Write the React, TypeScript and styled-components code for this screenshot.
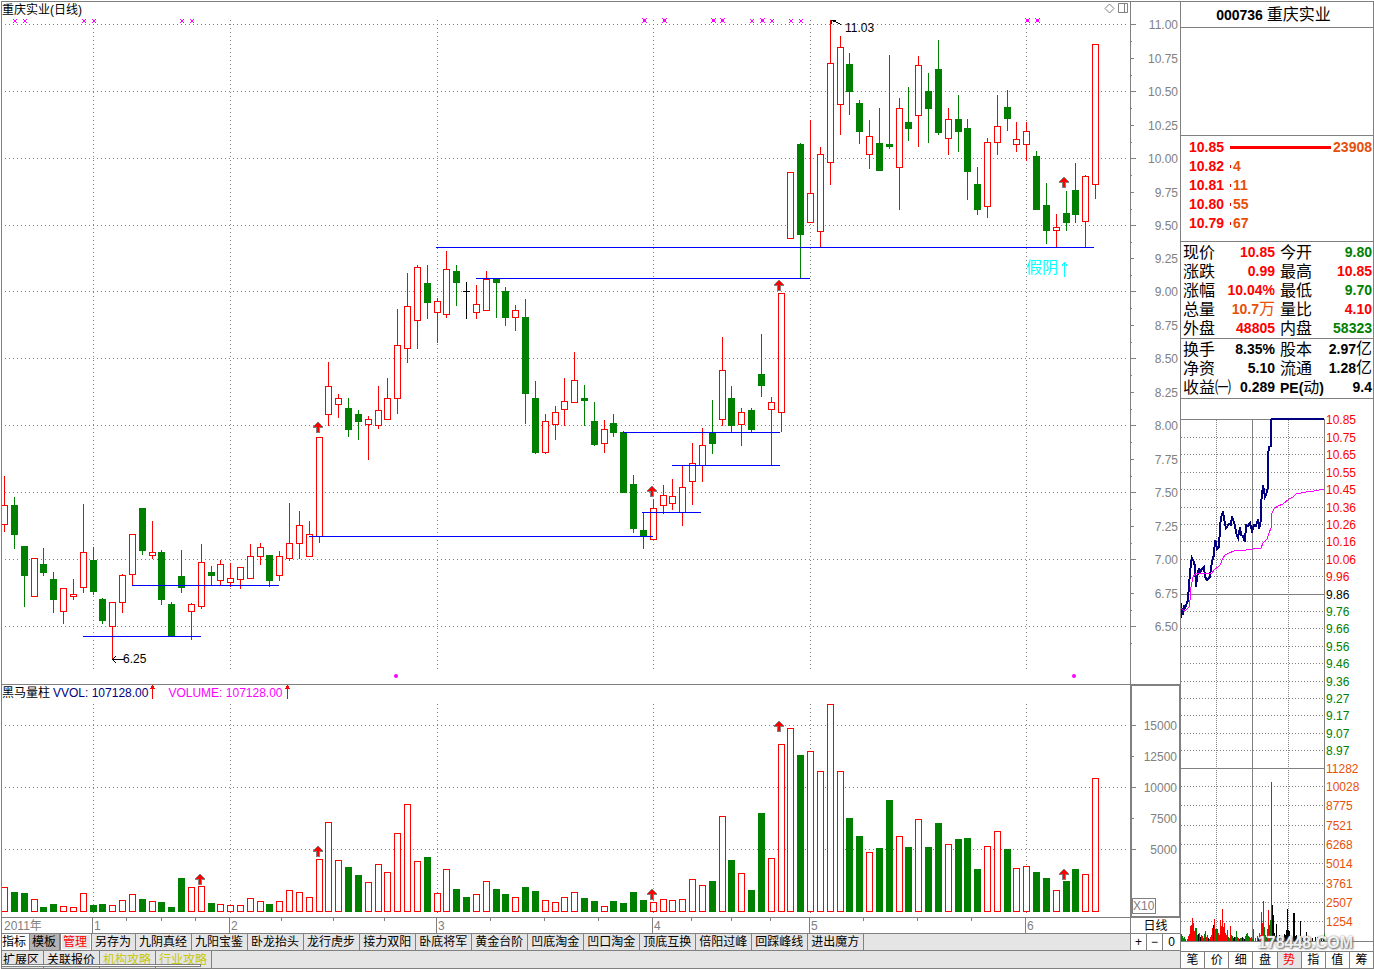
import React from "react";
import styled, { createGlobalStyle, css } from "styled-components";

const GRAY = "#808080";
const RED = "#ff0000";
const GREEN = "#008000";
const ORANGE = "#e6500a";
const NAVY = "#000080";
const BLUE = "#0000ff";
const MAGENTA = "#ff00ff";

const GlobalStyle = createGlobalStyle`
  * { box-sizing: border-box; }
  body {
    margin: 0;
    background: #ffffff;
    color: #000000;
    font-family: "Liberation Sans", "Noto Sans CJK SC", sans-serif;
    font-size: 12px;
  }
  button {
    margin: 0;
    padding: 0;
    border: 0;
    background: none;
    color: inherit;
    font: inherit;
    cursor: pointer;
  }
  svg { display: block; }
  svg text { font-family: "Liberation Sans", "Noto Sans CJK SC", sans-serif; }
`;

/* ---------- layout ---------- */

const Page = styled.div`
  display: flex;
  min-height: 100vh;
  padding: 1px 0 0 1px;
`;

const ChartSide = styled.main`
  flex: 1;
  min-width: 0;
  display: grid;
  grid-template-columns: minmax(0, 1fr) 50px;
  grid-template-rows: 683px 1fr 16px 17px 18px;
  border-top: 1px solid ${GRAY};
  border-left: 1px solid ${GRAY};
`;

const Pane = styled.section`
  min-width: 0;
  border-bottom: 1px solid ${GRAY};
`;

const AxisPane = styled(Pane)`
  border-left: 1px solid ${GRAY};
`;

const SelectedAxis = styled(Pane)`
  border: 1px solid ${GRAY};
  border-left-width: 2px;
  border-bottom-width: 2px;
`;

const PaneHeader = styled.header`
  display: flex;
  align-items: center;
  height: 16px;
  padding-right: 2px;
  line-height: 14px;
  white-space: nowrap;
`;

const PaneTitle = styled.h1`
  flex: 1;
  margin: 0;
  font-size: 12px;
  font-weight: normal;
`;

const PaneTools = styled.div`
  display: flex;
  align-self: flex-start;
  gap: 3px;
  padding-top: 1px;
`;

const Readout = styled.span<{ $color: string }>`
  display: flex;
  align-items: center;
  gap: 2px;
  margin-right: 13px;
  color: ${(p) => p.$color};
`;

const ReadoutName = styled.span`
  margin-right: 3px;
`;

const Canvas = styled.svg<{ $height: number }>`
  width: 100%;
  height: ${(p) => p.$height}px;
  overflow: hidden;
  shape-rendering: crispEdges;
`;

const PeriodButton = styled.button`
  && {
    border-left: 1px solid ${GRAY};
    border-bottom: 1px solid ${GRAY};
    line-height: 14px;
  }
`;

const TabBar = styled.nav<{ $wide?: boolean }>`
  position: relative;
  display: flex;
  overflow: hidden;
  background: #e5e5e5;
  border-bottom: 1px solid ${GRAY};
  ${(p) => p.$wide && css`grid-column: 1 / -1;`}
`;

type TabKind = "plain" | "white" | "dark" | "framed" | "short" | "yellow";

const tabKinds = {
  plain: css``,
  white: css`
    padding: 0 3px 0 0;
    background: #ffffff;
  `,
  dark: css`
    padding: 0 3px 0 2px;
    background: #b3b3b3;
    border-right-width: 2px;
  `,
  framed: css`
    padding: 0 4px 0 2px;
    color: ${RED};
    box-shadow: inset 0 0 0 1px #ffffff;
  `,
  short: css`
    padding: 0 4px 0 1px;
  `,
  yellow: css`
    color: #c8c800;
  `,
};

const Tab = styled.button<{ $kind: TabKind }>`
  && {
    flex: none;
    padding: 0 4px 0 3px;
    border-right: 1px solid ${GRAY};
    line-height: 16px;
    white-space: nowrap;
    ${(p) => tabKinds[p.$kind]}
  }
`;

const ScrollStrip = styled.span`
  position: absolute;
  left: 0;
  bottom: 1px;
  width: 199px;
  height: 3px;
  background: #ffffff;
  border: solid ${GRAY};
  border-width: 1px 1px 1px 0;
`;

const ZoomButtons = styled.div`
  display: grid;
  grid-template-columns: 15px 15px 1fr;
  gap: 1px;
  background: ${GRAY};
  border-left: 1px solid ${GRAY};
  border-bottom: 1px solid ${GRAY};
`;

const ZoomButton = styled.button`
  && {
    background: #ffffff;
    line-height: 16px;
  }
`;

const Side = styled.aside`
  position: relative;
  flex: none;
  width: 194px;
  display: flex;
  flex-direction: column;
  border: 1px solid ${GRAY};
`;

const SideTitle = styled.h2`
  height: 26px;
  margin: 0;
  padding-right: 7px;
  border-bottom: 1px solid ${GRAY};
  font-size: 14px;
  line-height: 26px;
  text-align: center;
`;

const Cjk = styled.span`
  font-size: 16px;
  font-weight: normal;
  line-height: 1;
`;

const EmptyBox = styled.div`
  height: 108px;
  border-bottom: 1px solid ${GRAY};
`;

const Quotes = styled.ul`
  height: 106px;
  margin: 0;
  padding: 2px 1px 0 8px;
  border-bottom: 1px solid ${GRAY};
  list-style: none;
  font-size: 14px;
  font-weight: bold;
  line-height: 19px;
`;

const QuoteRow = styled.li`
  display: flex;
  align-items: center;
  height: 19px;
`;

const QuotePrice = styled.span`
  width: 41px;
  color: ${RED};
`;

const QuoteBar = styled.span<{ $full: boolean }>`
  flex: ${(p) => (p.$full ? "1" : "none")};
  width: 1px;
  height: 3px;
  margin-right: 2px;
  background: ${RED};
`;

const QuoteSize = styled.span`
  color: ${ORANGE};
`;

const StatsBox = styled.div<{ $gap: number }>`
  padding: 1px 1px ${(p) => p.$gap}px 2px;
  border-bottom: 1px solid ${GRAY};
`;

const Stats = styled.table`
  width: 100%;
  table-layout: fixed;
  border-collapse: collapse;
  font-size: 14px;
  white-space: nowrap;
`;

const StatRow = styled.tr`
  height: 19px;
`;

const StatLabel = styled.th`
  padding: 0;
  font-size: 16px;
  font-weight: normal;
  line-height: 18px;
  text-align: left;
`;

const StatValue = styled.td<{ $color: string }>`
  padding: 0 0 2px;
  color: ${(p) => p.$color};
  font-weight: bold;
  line-height: 16px;
  text-align: right;
  &:nth-child(2) { padding-right: 5px; }
`;

const StatColumn = styled.col<{ $width: number }>`
  width: ${(p) => p.$width}px;
`;

const Latin = styled.b`
  font-size: 14px;
`;

const SideTabs = styled.nav`
  display: flex;
  margin-top: auto;
  height: 17px;
  border-top: 1px solid ${GRAY};
`;

const SideTab = styled.button<{ $active: boolean }>`
  && {
    flex: 1;
    line-height: 16px;
    color: ${(p) => (p.$active ? RED : "#000000")};
    background: ${(p) => (p.$active ? "#e5e5e5" : "#ffffff")};
    border-right: 1px solid ${GRAY};
  }
  &&:last-child { border-right: 0; }
`;

const Watermark = styled.span`
  position: absolute;
  right: 20px;
  bottom: 17px;
  color: rgba(255, 255, 255, 0.9);
  font-size: 16px;
  font-weight: bold;
  line-height: 16px;
  text-shadow: 1px 1px 2px #666666, 0 0 2px #999999;
  pointer-events: none;
`;

/* ---------- data ---------- */

type Kind = "r" | "g" | "k";
/* kind, high, body top, body bottom, low, volume top */
type Candle = [Kind, number, number, number, number, number];

const candles: Candle[] = [
  ["r", 476, 505, 525, 532, 887], ["g", 497, 505, 535, 549, 892], ["g", 546, 546, 576, 607, 893],
  ["r", 558, 558, 597, 597, 899], ["g", 548, 564, 573, 576, 907], ["g", 572, 579, 600, 613, 904],
  ["r", 588, 588, 612, 624, 906], ["r", 579, 594, 597, 600, 907], ["r", 504, 552, 588, 593, 893],
  ["g", 547, 560, 592, 595, 905], ["g", 598, 599, 621, 624, 904], ["r", 602, 602, 627, 659, 905],
  ["r", 574, 575, 603, 613, 900], ["r", 534, 534, 575, 586, 894], ["g", 508, 508, 551, 555, 899],
  ["r", 521, 552, 556, 559, 901], ["g", 550, 552, 600, 605, 902], ["g", 602, 604, 636, 636, 907],
  ["g", 550, 576, 588, 593, 878], ["r", 603, 604, 612, 640, 887], ["r", 544, 562, 607, 609, 886],
  ["g", 566, 572, 576, 586, 903], ["r", 560, 564, 581, 586, 904], ["r", 563, 578, 583, 587, 905],
  ["r", 567, 567, 580, 589, 905], ["r", 544, 556, 579, 579, 898], ["r", 543, 547, 557, 565, 901],
  ["g", 555, 555, 581, 587, 904], ["r", 551, 556, 576, 581, 901], ["r", 503, 543, 559, 561, 890],
  ["r", 511, 525, 544, 559, 892], ["r", 521, 534, 557, 557, 897], ["r", 437, 437, 537, 543, 859],
  ["r", 362, 386, 415, 426, 822], ["r", 394, 398, 405, 418, 860], ["g", 398, 408, 430, 437, 867],
  ["g", 410, 414, 422, 440, 875], ["r", 416, 419, 425, 460, 882], ["r", 386, 410, 426, 429, 864],
  ["r", 378, 398, 420, 420, 872], ["r", 309, 345, 399, 414, 833], ["r", 273, 306, 349, 363, 804],
  ["r", 265, 267, 321, 349, 861], ["g", 265, 283, 303, 319, 857], ["r", 298, 301, 313, 343, 893],
  ["r", 251, 269, 315, 318, 869], ["g", 265, 271, 283, 306, 889], ["k", 282, 291, 292, 319, 897],
  ["r", 285, 304, 313, 319, 894], ["r", 271, 279, 311, 311, 881], ["g", 278, 278, 283, 318, 889],
  ["g", 287, 291, 318, 326, 894], ["r", 305, 310, 318, 331, 897], ["g", 299, 317, 394, 424, 887],
  ["g", 381, 398, 453, 454, 891], ["r", 414, 421, 453, 454, 900], ["r", 406, 412, 425, 440, 902],
  ["r", 378, 401, 410, 426, 897], ["r", 352, 380, 403, 403, 892], ["g", 385, 398, 401, 426, 898],
  ["g", 402, 421, 445, 446, 901], ["r", 420, 429, 444, 453, 906], ["g", 414, 423, 433, 437, 901],
  ["g", 431, 432, 493, 493, 903], ["g", 475, 484, 529, 533, 892], ["g", 513, 530, 536, 549, 900],
  ["r", 499, 508, 540, 540, 902], ["r", 485, 495, 506, 514, 899], ["r", 479, 496, 504, 510, 900],
  ["r", 466, 487, 513, 526, 899], ["r", 443, 463, 482, 505, 879], ["r", 428, 445, 466, 482, 885],
  ["g", 400, 432, 444, 454, 881], ["r", 337, 370, 420, 426, 816], ["g", 386, 398, 426, 432, 860],
  ["r", 408, 412, 425, 446, 873], ["g", 408, 410, 430, 432, 890], ["g", 334, 374, 386, 397, 813],
  ["r", 397, 402, 410, 465, 858], ["r", 293, 293, 413, 432, 744], ["r", 172, 172, 239, 239, 728],
  ["g", 143, 144, 235, 278, 755], ["r", 120, 193, 223, 223, 751], ["r", 147, 154, 232, 247, 771],
  ["r", 20, 63, 163, 185, 704], ["r", 36, 47, 105, 135, 771], ["g", 53, 64, 92, 115, 818],
  ["g", 100, 103, 132, 144, 836], ["r", 120, 136, 155, 169, 852], ["g", 108, 143, 171, 171, 848],
  ["g", 55, 144, 147, 149, 800], ["r", 98, 108, 168, 210, 836], ["g", 87, 122, 129, 141, 847],
  ["r", 56, 65, 116, 147, 819], ["g", 73, 91, 109, 143, 847], ["g", 40, 69, 133, 135, 823],
  ["r", 108, 119, 139, 155, 844], ["g", 95, 119, 132, 152, 839], ["g", 119, 128, 172, 200, 838],
  ["g", 167, 184, 210, 215, 869], ["r", 138, 142, 207, 218, 846], ["r", 95, 126, 143, 155, 831],
  ["g", 90, 107, 119, 131, 849], ["r", 122, 139, 145, 152, 868], ["r", 122, 131, 145, 161, 866],
  ["g", 151, 156, 210, 210, 872], ["g", 183, 205, 231, 244, 878], ["r", 214, 227, 231, 247, 890],
  ["g", 191, 213, 223, 231, 881], ["g", 163, 190, 215, 223, 869], ["r", 175, 176, 222, 247, 874],
  ["r", 44, 44, 185, 199, 778],
];

const barX = (i: number) => Math.floor(4.6 + 9.829 * i);
const kindColor: Record<Kind, string> = { r: RED, g: GREEN, k: "#000000" };

const monthX = [93, 230, 437, 653, 810, 1026];
const priceTicks = [24, 58, 91, 125, 158, 192, 225, 258, 291, 325, 358, 392, 425, 459, 492, 526, 559, 593, 626];
const volumeTicks: [number, string][] = [
  [725, "15000"], [756, "12500"], [787, "10000"], [818, "7500"], [849, "5000"],
];

/* x from, x to, y */
const levels: [number, number, number][] = [
  [83, 201, 636], [132, 279, 585], [309, 653, 536], [642, 701, 512],
  [672, 780, 465], [623, 780, 432], [476, 810, 278], [436, 1094, 247],
];

const priceArrows = [[318, 422], [652, 486], [779, 280], [1064, 177]];
const volumeArrows = [[200, 874], [318, 846], [652, 889], [779, 721], [1064, 869]];

const smallCrosses = [15, 25, 84, 94, 182, 192, 752, 772, 791, 801];
const largeCrosses = [644, 664, 713, 722, 762, 1027, 1037];

const indicatorTabs: [string, TabKind][] = [
  ["指标", "white"], ["模板", "dark"], ["管理", "framed"], ["另存为", "plain"],
  ["九阴真经", "plain"], ["九阳宝鉴", "plain"], ["卧龙抬头", "plain"], ["龙行虎步", "plain"],
  ["接力双阳", "plain"], ["卧底将军", "plain"], ["黄金台阶", "plain"], ["凹底淘金", "plain"],
  ["凹口淘金", "plain"], ["顶底互换", "plain"], ["倍阳过峰", "plain"], ["回踩峰线", "plain"],
  ["进出魔方", "plain"],
];

const extraTabs: [string, TabKind][] = [
  ["扩展区", "short"], ["关联报价", "plain"], ["机构攻略", "yellow"], ["行业攻略", "yellow"],
];

const quotes: [string, string][] = [
  ["10.85", "23908"], ["10.82", "4"], ["10.81", "11"], ["10.80", "55"], ["10.79", "67"],
];

type Stat = { label: React.ReactNode; value: React.ReactNode; color: string };
const stat = (label: React.ReactNode, value: React.ReactNode, color = "#000000"): Stat => ({ label, value, color });

const tradeStats: Stat[][] = [
  [stat("现价", "10.85", RED), stat("今开", "9.80", GREEN)],
  [stat("涨跌", "0.99", RED), stat("最高", "10.85", RED)],
  [stat("涨幅", "10.04%", RED), stat("最低", "9.70", GREEN)],
  [stat("总量", <>10.7<Cjk>万</Cjk></>, ORANGE), stat("量比", "4.10", RED)],
  [stat("外盘", "48805", RED), stat("内盘", "58323", GREEN)],
];

const companyStats: Stat[][] = [
  [stat("换手", "8.35%"), stat("股本", <>2.97<Cjk>亿</Cjk></>)],
  [stat("净资", "5.10"), stat("流通", <>1.28<Cjk>亿</Cjk></>)],
  [stat("收益㈠", "0.289"), stat(<><Latin>PE(</Latin>动<Latin>)</Latin></>, "9.4")],
];

const dayPrices: [number, string][] = [
  [21, "10.85"], [39, "10.75"], [56, "10.65"], [74, "10.55"], [91, "10.45"], [109, "10.36"],
  [126, "10.26"], [143, "10.16"], [161, "10.06"], [178, "9.96"], [196, "9.86"], [213, "9.76"],
  [230, "9.66"], [248, "9.56"], [265, "9.46"], [283, "9.36"], [300, "9.27"], [317, "9.17"],
  [335, "9.07"], [352, "8.97"],
];
const dayVolumes: [number, string][] = [
  [370, "11282"], [388, "10028"], [407, "8775"], [427, "7521"], [446, "6268"],
  [465, "5014"], [485, "3761"], [504, "2507"], [523, "1254"],
];

const dayPriceLine =
  "0,204 0,219 1,209 2,216 3,206 4,209 6,204 7,201 8,186 9,174 10,164 11,159 13,163 14,168 15,188 16,178 18,169 19,173 21,170 23,168 24,178 26,181 28,179 29,178 30,168 32,159 33,156 34,141 35,144 36,150 38,148 39,128 40,119 42,112 43,119 45,129 48,125 50,126 51,117 52,121 54,126 55,134 57,139 59,128 60,136 62,137 64,143 65,126 67,127 69,124 71,132 73,126 75,127 77,120 78,130 80,121 80,105 82,86 84,98 85,96 87,88 87,56 88,48 90,47 90,21 91,20 143,20";
const dayAverageLine =
  "0,209 2,211 5,211 8,208 9,201 10,188 12,178 14,175 18,174 31,174 33,171 37,168 39,166 42,159 44,156 48,154 53,152 58,151 65,151 72,150 80,149 82,144 86,140 88,134 90,129 91,114 93,110 97,107 102,105 108,100 112,98 115,95 120,94 125,93 133,92 143,90";

/* minute volume: x, height, kind */
const minuteBars: [number, number, Kind][] = [
  [0, 7, "g"], [1, 5, "g"], [2, 3, "r"], [3, 4, "g"], [4, 2, "r"], [6, 2, "r"], [7, 5, "r"], [8, 7, "r"],
  [9, 15, "r"], [10, 16, "r"], [11, 23, "r"], [12, 18, "r"], [13, 10, "r"], [14, 13, "g"], [15, 13, "g"],
  [16, 6, "r"], [17, 7, "k"], [18, 8, "r"], [19, 4, "k"], [20, 6, "g"], [21, 5, "r"], [22, 3, "r"],
  [23, 7, "g"], [24, 10, "g"], [25, 4, "r"], [26, 6, "g"], [27, 3, "k"], [28, 2, "r"], [29, 4, "r"],
  [30, 6, "r"], [31, 13, "r"], [32, 16, "k"], [33, 22, "r"], [34, 12, "r"], [35, 12, "g"], [36, 12, "r"],
  [37, 8, "r"], [38, 6, "g"], [39, 21, "r"], [40, 15, "r"], [41, 32, "r"], [42, 14, "r"], [43, 18, "r"],
  [44, 8, "g"], [45, 6, "r"], [46, 11, "g"], [47, 4, "g"], [48, 3, "r"], [49, 15, "r"], [50, 6, "r"],
  [51, 5, "g"], [52, 3, "k"], [53, 4, "k"], [54, 4, "r"], [55, 10, "g"], [56, 4, "g"], [57, 3, "r"],
  [58, 2, "k"], [59, 3, "g"], [60, 3, "r"], [61, 4, "k"], [62, 3, "r"], [63, 2, "k"], [64, 5, "g"],
  [65, 7, "g"], [66, 8, "r"], [67, 5, "g"], [68, 4, "r"], [69, 3, "r"], [70, 4, "r"], [71, 2, "g"],
  [72, 12, "r"], [74, 3, "r"], [76, 5, "r"], [77, 3, "k"], [78, 8, "g"], [79, 6, "r"], [80, 29, "r"],
  [81, 18, "r"], [82, 40, "r"], [83, 14, "g"], [84, 6, "r"], [85, 4, "g"], [86, 12, "r"], [87, 31, "r"],
  [88, 16, "r"], [89, 21, "g"], [90, 159, "r"], [91, 36, "k"], [92, 26, "k"], [93, 8, "k"], [94, 5, "k"],
  [95, 17, "k"], [96, 4, "k"], [98, 6, "k"], [100, 5, "k"], [102, 3, "k"], [103, 7, "k"], [104, 6, "k"],
  [105, 11, "k"], [106, 32, "k"], [107, 11, "k"], [108, 10, "k"], [110, 5, "k"], [112, 28, "k"],
  [113, 28, "k"], [114, 5, "k"], [115, 6, "k"], [117, 4, "k"], [119, 20, "k"], [121, 3, "k"],
  [125, 9, "k"], [127, 5, "k"], [128, 4, "k"], [131, 3, "k"], [134, 4, "k"], [136, 4, "k"],
  [138, 4, "k"], [140, 3, "k"], [142, 4, "k"], [143, 7, "g"],
];

/* ---------- drawings ---------- */

const SignalArrow = ({ x, y }: { x: number; y: number }) => (
  <g transform={`translate(${x - 5} ${y})`}>
    <path
      fill={GRAY}
      d="M4 0h2v1h1v1h1v1h1v1h1v2h-3v5h-4v-5h-3v-2h1v-1h1v-1h1v-1h1z"
    />
    <path fill={RED} d="M4 1h2v1h1v1h1v1h1v1h-3v5h-2v-5h-3v-1h1v-1h1v-1h1z" />
  </g>
);

const RiseMark = () => (
  <svg width="5" height="16" viewBox="0 0 5 16" shapeRendering="crispEdges" aria-hidden="true">
    <path fill={RED} d="M2 0h1v1h1v2h1v1h-2v10h-1v-10h-2v-1h1v-2h1z" />
  </svg>
);

const Dots = ({ x1, y1, x2, y2 }: { x1: number; y1: number; x2: number | string; y2: number }) => (
  <line x1={x1} y1={y1} x2={x2} y2={y2} stroke={GRAY} strokeDasharray="1 3" />
);

const Body = ({ x, top, bottom, kind }: { x: number; top: number; bottom: number; kind: Kind }) =>
  kind === "r" ? (
    <rect x={x - 2.5} y={top + 0.5} width={6} height={bottom - top - 1} fill="#ffffff" stroke={RED} />
  ) : (
    <rect x={x - 3} y={top} width={7} height={bottom - top} fill={kindColor[kind]} />
  );

const PriceChart = () => (
  <Canvas $height={666} role="img" aria-label="日线">
    <g transform="translate(-2 -18)">
      {priceTicks.filter((_, i) => i % 2 === 0).map((y) => (
        <Dots key={y} x1={5} y1={y + 0.5} x2="100%" y2={y + 0.5} />
      ))}
      {monthX.map((x) => (
        <Dots key={x} x1={x + 0.5} y1={20} x2={x + 0.5} y2={669} />
      ))}
      {smallCrosses.map((x) => (
        <path
          key={x}
          fill={MAGENTA}
          d={`M${x - 2} 19h1v1h2v-1h1v1h-1v2h1v1h-1v-1h-2v1h-1v-1h1v-2h-1z`}
        />
      ))}
      {largeCrosses.map((x) => (
        <path
          key={x}
          fill={MAGENTA}
          d={`M${x - 2} 18h1v1h3v-1h1v1h-1v3h1v1h-1v-1h-3v1h-1v-1h1v-3h-1z`}
        />
      ))}
      {candles.map(([kind, high, top, bottom, low], i) => {
        const x = barX(i);
        return (
          <g key={i}>
            <rect x={x} y={high} width={1} height={low - high} fill={kindColor[kind]} />
            <Body x={x} top={top} bottom={bottom} kind={kind} />
          </g>
        );
      })}
      {levels.map(([from, to, y]) => (
        <rect key={y} x={from} y={y} width={to - from} height={1} fill={BLUE} />
      ))}
      {priceArrows.map(([x, y]) => (
        <SignalArrow key={x} x={x} y={y} />
      ))}
      <path d="M112 659.5h12M116 656l-3.500 3.500l3.500 3.500" fill="none" stroke="#000000" />
      <text x={123} y={663} fontSize={12}>6.25</text>
      <path d="M831 20.500l4 1l6 3M831 20.500h5M831.500 20v4" fill="none" stroke="#000000" />
      <text x={845} y={32} fontSize={12}>11.03</text>
      <text x={1026} y={273} fontSize={16} fill="#00ffff">假阴</text>
      <path d="M1064.500 277v-15M1062 265.500l2.500 -3l2.500 3" fill="none" stroke="#00ffff" />
      <circle cx={396} cy={676} r={2} fill={MAGENTA} shapeRendering="auto" />
      <circle cx={1074} cy={676} r={2} fill={MAGENTA} shapeRendering="auto" />
    </g>
  </Canvas>
);

const PriceAxis = () => (
  <Canvas $height={682} aria-hidden="true">
    <g transform="translate(0 -2)">
      {priceTicks.map((y, i) => (
        <g key={y} fill={GRAY}>
          <rect x={0} y={y} width={i % 2 === 0 ? 5 : 3} height={1} />
          <rect x={0} y={y + 17} width={1} height={1} />
          <text x={47} y={y + 5} fontSize={12} textAnchor="end">
            {(11 - i * 0.25).toFixed(2)}
          </text>
        </g>
      ))}
    </g>
  </Canvas>
);

const VolumeChart = () => (
  <Canvas $height={216} role="img" aria-label="成交量">
    <g transform="translate(-2 -701)">
      {volumeTicks.filter((_, i) => i % 2 === 0).map(([y]) => (
        <Dots key={y} x1={5} y1={y + 0.5} x2="100%" y2={y + 0.5} />
      ))}
      {monthX.map((x) => (
        <Dots key={x} x1={x + 0.5} y1={704} x2={x + 0.5} y2={913} />
      ))}
      {candles.map(([kind, , , , , top], i) => (
        <Body key={i} x={barX(i)} top={top} bottom={912} kind={kind === "k" ? "g" : kind} />
      ))}
      {volumeArrows.map(([x, y]) => (
        <SignalArrow key={x} x={x} y={y} />
      ))}
    </g>
  </Canvas>
);

const VolumeAxis = () => (
  <Canvas $height={228} aria-hidden="true">
    <g transform="translate(-1132 -686)" fill={GRAY}>
      {volumeTicks.map(([y, label], i) => (
        <g key={y}>
          <rect x={1132} y={y} width={i % 2 === 0 ? 4 : 2} height={1} />
          <text x={1177} y={y + 5} fontSize={12} textAnchor="end">{label}</text>
        </g>
      ))}
      <rect x={1132.5} y={898.5} width={23} height={15} fill="none" stroke={GRAY} />
      <text x={1133} y={910} fontSize={12}>X10</text>
    </g>
  </Canvas>
);

const months = [92, 229, 436, 652, 809, 1025];
const weeks = [126, 161, 195, 281, 333, 384, 490, 544, 598, 691, 731, 770, 863, 917, 971];

const DateAxis = () => (
  <Canvas $height={15} role="img" aria-label="2011年">
    <g transform="translate(-2 0)" fill={GRAY}>
      <text x={4} y={12} fontSize={12}>2011年</text>
      {months.map((x, i) => (
        <g key={x}>
          <rect x={x} y={0} width={1} height={15} />
          <text x={x + 2} y={12} fontSize={12}>{i + 1}</text>
        </g>
      ))}
      {weeks.map((x) => (
        <rect key={x} x={x} y={0} width={1} height={3} />
      ))}
    </g>
  </Canvas>
);

const priceColor = (label: string) =>
  label === "9.86" ? "#000000" : Number(label) > 9.86 ? RED : GREEN;

const DayChart = () => (
  <Canvas $height={552} role="img" aria-label="分时">
    {[...dayPrices, ...dayVolumes].map(([y, label]) => {
      const solid = label === "10.85" || label === "9.86" || label === "11282";
      return (
        <line
          key={label}
          x1={0}
          y1={y - 0.5}
          x2={143}
          y2={y - 0.5}
          stroke={GRAY}
          strokeDasharray={solid ? undefined : "1 2"}
        />
      );
    })}
    {[35, 107].map((x) => (
      <line key={x} x1={x + 0.5} y1={21} x2={x + 0.5} y2={542} stroke={GRAY} strokeDasharray="1 1" />
    ))}
    {[71, 143].map((x) => (
      <rect key={x} x={x} y={20} width={1} height={522} fill={GRAY} />
    ))}
    {minuteBars.map(([x, height, kind]) => (
      <rect key={x} x={x} y={542 - height} width={1} height={height} fill={kindColor[kind]} />
    ))}
    <rect x={0} y={542} width="100%" height={1} fill={GRAY} />
    <polyline points={dayPriceLine} fill="none" stroke={NAVY} strokeWidth={2} />
    <polyline points={dayAverageLine} fill="none" stroke={MAGENTA} />
    {dayPrices.map(([y, label]) => (
      <text key={label} x={145} y={y + 4} fontSize={12} fill={priceColor(label)}>{label}</text>
    ))}
    {dayVolumes.map(([y, label]) => (
      <text key={label} x={145} y={y + 4} fontSize={12} fill={ORANGE}>{label}</text>
    ))}
  </Canvas>
);

type StatsTableProps = { rows: Stat[][]; labelWidth: number; gap: number; name: string };

const StatsTable = ({ rows, labelWidth, gap, name }: StatsTableProps) => (
  <StatsBox $gap={gap}>
    <Stats aria-label={name}>
      <colgroup>
        <StatColumn $width={labelWidth} />
        <StatColumn $width={97 - labelWidth} />
        <StatColumn $width={labelWidth} />
        <col />
      </colgroup>
      <tbody>
        {rows.map((row, i) => (
          <StatRow key={i}>
            {row.map((cell, j) => (
              <React.Fragment key={j}>
                <StatLabel scope="row">{cell.label}</StatLabel>
                <StatValue $color={cell.color}>{cell.value}</StatValue>
              </React.Fragment>
            ))}
          </StatRow>
        ))}
      </tbody>
    </Stats>
  </StatsBox>
);

export default function App() {
  return (
    <>
      <GlobalStyle />
      <Page>
        <ChartSide>
          <Pane>
            <PaneHeader>
              <PaneTitle>重庆实业(日线)</PaneTitle>
              <PaneTools>
                <button type="button" aria-label="标记">
                  <svg width="11" height="11" viewBox="0 0 11 11" fill="none" stroke={GRAY}>
                    <path d="M5.500 1L10 5.500L5.500 10L1 5.500z" />
                  </svg>
                </button>
                <button type="button" aria-label="分栏">
                  <svg width="10" height="11" viewBox="0 0 10 11" fill="none" stroke={GRAY}>
                    <path d="M.5 .5h9v9h-9zM6.500 .5v9" />
                  </svg>
                </button>
              </PaneTools>
            </PaneHeader>
            <PriceChart />
          </Pane>
          <AxisPane>
            <PriceAxis />
          </AxisPane>

          <Pane>
            <PaneHeader>
              <ReadoutName>黑马量柱</ReadoutName>
              <Readout $color={NAVY}>
                VVOL: 107128.00
                <RiseMark />
              </Readout>
              <Readout $color={MAGENTA}>
                VOLUME: 107128.00
                <RiseMark />
              </Readout>
            </PaneHeader>
            <VolumeChart />
          </Pane>
          <SelectedAxis>
            <VolumeAxis />
          </SelectedAxis>

          <Pane>
            <DateAxis />
          </Pane>
          <PeriodButton type="button">日线</PeriodButton>

          <TabBar aria-label="指标">
            {indicatorTabs.map(([label, kind]) => (
              <Tab key={label} type="button" $kind={kind}>{label}</Tab>
            ))}
          </TabBar>
          <ZoomButtons>
            <ZoomButton type="button">+</ZoomButton>
            <ZoomButton type="button">−</ZoomButton>
            <ZoomButton type="button">0</ZoomButton>
          </ZoomButtons>

          <TabBar $wide aria-label="扩展">
            {extraTabs.map(([label, kind]) => (
              <Tab key={label} type="button" $kind={kind}>{label}</Tab>
            ))}
            <ScrollStrip />
          </TabBar>
        </ChartSide>

        <Side>
          <SideTitle>000736 <Cjk>重庆实业</Cjk></SideTitle>
          <EmptyBox />
          <Quotes>
            {quotes.map(([price, size], i) => (
              <QuoteRow key={price}>
                <QuotePrice>{price}</QuotePrice>
                <QuoteBar $full={i === 0} />
                <QuoteSize>{size}</QuoteSize>
              </QuoteRow>
            ))}
          </Quotes>
          <StatsTable rows={tradeStats} labelWidth={40} gap={0} name="行情" />
          <StatsTable rows={companyStats} labelWidth={48} gap={1} name="财务" />
          <DayChart />
          <SideTabs>
            {["笔", "价", "细", "盘", "势", "指", "值", "筹"].map((label) => (
              <SideTab key={label} type="button" $active={label === "势"}>{label}</SideTab>
            ))}
          </SideTabs>
          <Watermark>178448.COM</Watermark>
        </Side>
      </Page>
    </>
  );
}
